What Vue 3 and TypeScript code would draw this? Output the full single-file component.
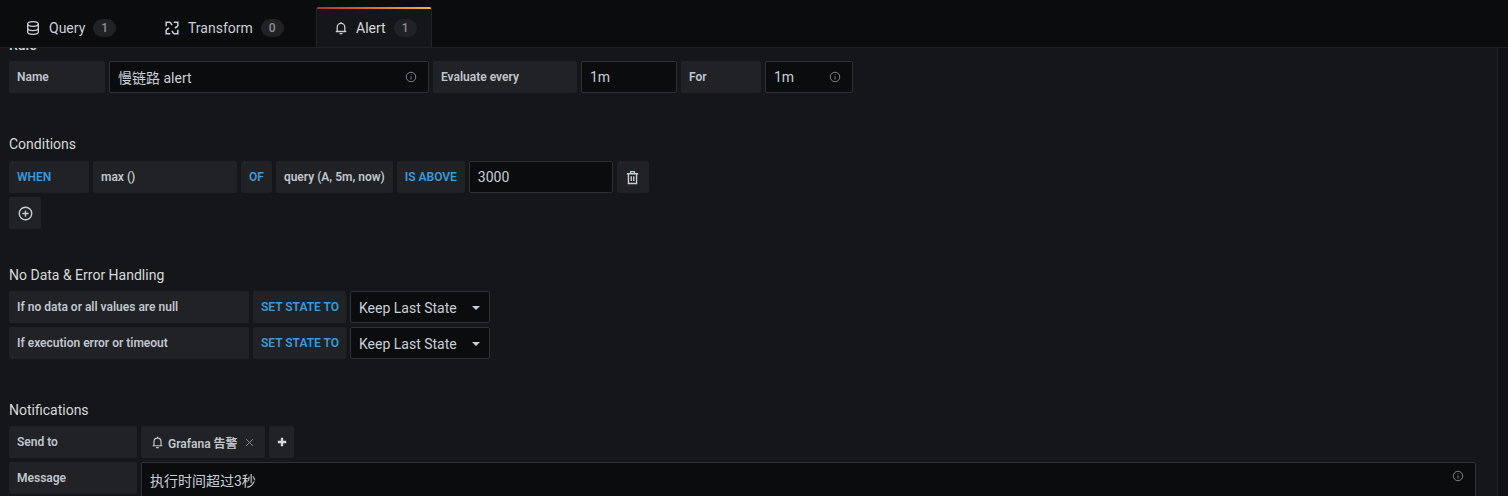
<script setup lang="ts">
const tabs = [
  { name: 'Query', count: 1, icon: 'db' },
  { name: 'Transform', count: 0, icon: 'tr' },
  { name: 'Alert', count: 1, icon: 'bell' },
]
</script>

<template>
  <div class="page">
    <div class="tabs">
      <div v-for="t in tabs" :key="t.name" class="tab" :class="[t.icon, { active: t.icon === 'bell' }]">
        <svg v-if="t.icon === 'db'" class="ticon dbi" viewBox="0 0 24 24" fill="none" stroke="currentColor" stroke-width="2">
          <path d="M4 6c0-2 3.500-3.500 8-3.500s8 1.500 8 3.500v12c0 2-3.500 3.500-8 3.500s-8-1.500-8-3.500z" />
          <path d="M4 6c0 2 3.500 3.500 8 3.500s8-1.500 8-3.500M4 12.500c0 2 3.500 3.500 8 3.500s8-1.500 8-3.500" />
        </svg>
        <svg v-else-if="t.icon === 'tr'" class="ticon" viewBox="0 0 24 24" fill="none" stroke="currentColor" stroke-width="2.600">
          <path d="M2 9V2h7M15 2h7v7M22 15v7h-7M9 22H2v-7" />
          <path d="M9 2l3 5M15 22l-3-5M2 15l5-3M22 9l-5 3" />
        </svg>
        <svg v-else class="ticon" viewBox="0 0 24 24" fill="none" stroke="currentColor" stroke-width="2.200">
          <path d="M5.500 17v-6.500a6.500 6.500 0 0 1 13 0V17M3 18h18M9.500 21.500h5M12 1.500v2.500" />
        </svg>
        <span class="tname">{{ t.name }}</span>
        <span class="count">{{ t.count }}</span>
      </div>
    </div>

    <div class="content">
      <h5 class="title clipped">Rule</h5>
      <div class="row">
        <div class="label w96">Name</div>
        <div class="input w320">
          <span>慢链路 alert</span>
          <svg class="info" viewBox="0 0 24 24" fill="none" stroke="currentColor" stroke-width="2"><circle cx="12" cy="12" r="9.500" /><path d="M12 11v6M12 7v1.500" /></svg>
        </div>
        <div class="label w144">Evaluate every</div>
        <div class="input w96"><span>1m</span></div>
        <div class="label w80">For</div>
        <div class="input w88">
          <span>1m</span>
          <svg class="info" viewBox="0 0 24 24" fill="none" stroke="currentColor" stroke-width="2"><circle cx="12" cy="12" r="9.500" /><path d="M12 11v6M12 7v1.500" /></svg>
        </div>
      </div>

      <h5 class="title t-cond">Conditions</h5>
      <div class="row">
        <div class="label blue w80">WHEN</div>
        <div class="label w144">max ()</div>
        <div class="label blue">OF</div>
        <div class="label">query (A, 5m, now)</div>
        <div class="label blue w68">IS ABOVE</div>
        <div class="input w144"><span>3000</span></div>
        <div class="label iconbtn">
          <svg class="btn-icon" viewBox="0 0 24 24" fill="none" stroke="currentColor" stroke-width="2.200"><path d="M3 6h18M9 6V2.500h6V6M5.500 6v15.500h13V6M10 10v7.500M14 10v7.500" /></svg>
        </div>
      </div>
      <div class="row">
        <div class="label iconbtn">
          <svg class="btn-icon" viewBox="0 0 24 24" fill="none" stroke="currentColor" stroke-width="2.200"><circle cx="12" cy="12" r="10" /><path d="M12 7v10M7 12h10" /></svg>
        </div>
      </div>

      <h5 class="title t-nodata">No Data &amp; Error Handling</h5>
      <div class="row">
        <div class="label w240">If no data or all values are null</div>
        <div class="label blue w93">SET STATE TO</div>
        <div class="input select"><span>Keep Last State</span><i class="caret"></i></div>
      </div>
      <div class="row">
        <div class="label w240">If execution error or timeout</div>
        <div class="label blue w93">SET STATE TO</div>
        <div class="input select"><span>Keep Last State</span><i class="caret"></i></div>
      </div>

      <h5 class="title t-notif">Notifications</h5>
      <div class="row">
        <div class="label w128">Send to</div>
        <div class="label chip">
          <svg class="chip-bell" viewBox="0 0 24 24" fill="none" stroke="currentColor" stroke-width="2.200"><path d="M5.500 17v-6.500a6.500 6.500 0 0 1 13 0V17M3 18h18M9.500 21.500h5M12 1.500v2.500" /></svg>
          <span>Grafana 告警</span>
          <svg class="chip-x" viewBox="0 0 24 24" fill="none" stroke="currentColor" stroke-width="2.600"><path d="M3 3l18 18M21 3L3 21" /></svg>
        </div>
        <div class="label plus">
          <svg class="plus-icon" viewBox="0 0 24 24" fill="none" stroke="currentColor" stroke-width="5.500"><path d="M12 2v20M2 12h20" /></svg>
        </div>
      </div>
      <div class="row">
        <div class="label w128">Message</div>
        <div class="input message">
          <span>执行时间超过3秒</span>
          <svg class="info" viewBox="0 0 24 24" fill="none" stroke="currentColor" stroke-width="2"><circle cx="12" cy="12" r="9.500" /><path d="M12 11v6M12 7v1.500" /></svg>
        </div>
      </div>
    </div>
  </div>
</template>

<style>
html, body { margin: 0; background: #0f1013; }
</style>

<style scoped>
.page {
  width: 1508px;
  height: 496px;
  overflow: hidden;
  background: #0f1013;
  font-family: Roboto, "Noto Sans CJK SC", sans-serif;
  color: #c7d0d9;
  position: relative;
}
.tabs {
  height: 48px;
  box-sizing: border-box;
  background: #0b0c0e;
  border-bottom: 1px solid #202226;
  display: flex;
  align-items: flex-end;
  padding-left: 9px;
  position: relative;
  z-index: 2;
}
.tab {
  height: 40px;
  box-sizing: border-box;
  display: flex;
  align-items: center;
  font-size: 14px;
  padding-top: 2px;
  color: #c7d0d9;
}
.tab.db { width: 148px; padding-left: 16px; }
.tab.tr { width: 159px; padding-left: 8px; }
.tab.active {
  width: 116px;
  height: 41px;
  margin-bottom: -1px;
  padding-left: 17px;
  background: linear-gradient(90deg, #b5302a 0%, #f0b545 100%) top / 100% 2px no-repeat, #141619;
  border: 1px solid #202226;
  border-top: 0;
  border-radius: 2px 2px 0 0;
  color: #d8d9da;
}
.ticon { width: 14px; height: 14px; margin-right: 8px; color: #c7d0d9; flex: none; }
.ticon.dbi { width: 16px; height: 16px; }
.tab.tr .ticon { margin-right: 9px; }
.count {
  margin-left: 8px;
  width: 23px;
  height: 18px;
  border-radius: 9px;
  background: #202226;
  color: #8e8e8e;
  font-size: 12px;
  font-weight: 500;
  text-align: center;
  line-height: 18px;
}
.content {
  width: 1498px;
  height: 482px;
  box-sizing: border-box;
  padding: 0 9px;
  margin-top: -34px;
  position: relative;
  z-index: 1;
  background: #141619;
  border-right: 1px solid #202226;
}
.title {
  margin: 0 0 8px;
  font-size: 14px;
  font-weight: 400;
  line-height: 18px;
  height: 18px;
  color: #d8d9da;
}
.content > .clipped {
  margin: 0 0 9px;
  padding-top: 22px;
  height: 16px;
  line-height: 18px;
  font-weight: 500;
}
.t-cond { margin-top: 42px; margin-bottom: 8px; }
.t-nodata { margin-top: 37px; margin-bottom: 7px; }
.t-notif { margin-top: 42px; margin-bottom: 7px; }
.row {
  display: flex;
  gap: 4px;
  height: 32px;
  margin-bottom: 4px;
}
.label {
  height: 32px;
  box-sizing: border-box;
  background: #202226;
  border-radius: 2px;
  padding: 0 8px;
  display: flex;
  align-items: center;
  font-size: 12px;
  font-weight: 600;
  color: #c0c6ce;
  white-space: nowrap;
}
.blue { color: #3a9ad9; }
.input {
  height: 32px;
  box-sizing: border-box;
  background: #0b0c0e;
  border: 1px solid #2c3235;
  border-radius: 2px;
  padding: 0 8px;
  display: flex;
  align-items: center;
  justify-content: space-between;
  font-size: 14px;
  color: #c7d0d9;
}
.w68 { width: 68px; }
.w80 { width: 80px; }
.w88 { width: 88px; }
.w93 { width: 93px; }
.w96 { width: 96px; }
.w128 { width: 128px; }
.w144 { width: 144px; }
.w240 { width: 240px; }
.w320 { width: 320px; }
.info { width: 12px; height: 12px; color: #7b8087; margin-right: 3px; flex: none; }
.iconbtn { width: 32px; justify-content: center; padding: 0; }
.btn-icon { width: 15px; height: 15px; color: #c7d0d9; }
.select { width: 140px; padding-top: 1px; }
.caret {
  width: 0; height: 0;
  border-left: 4px solid transparent;
  border-right: 4px solid transparent;
  border-top: 4px solid #c7d0d9;
  margin-right: 1px;
}
.chip { width: 124px; padding-left: 10px; }
.chip-bell { width: 13px; height: 13px; margin-right: 4px; flex: none; }
.chip-x { width: 9px; height: 9px; margin-left: 7px; color: #8e8e8e; flex: none; }
.plus { width: 25px; justify-content: center; padding: 0; }
.plus-icon { width: 10px; height: 10px; color: #d8d9da; }
.message { width: 1335px; height: 60px; align-items: flex-start; padding-top: 7px; }
</style>
